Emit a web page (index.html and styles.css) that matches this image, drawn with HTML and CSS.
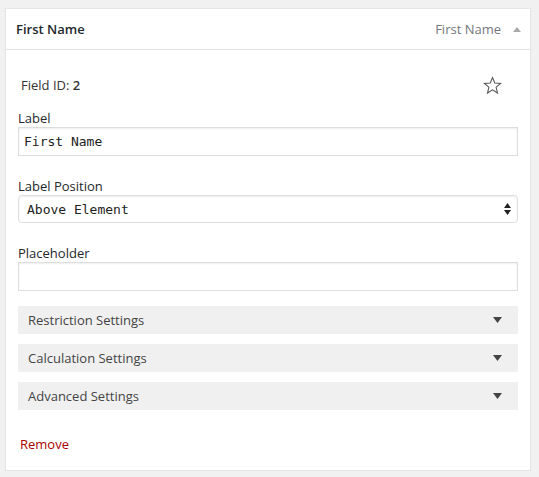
FILE: index.html
```html
<!DOCTYPE html>
<html>
<head>
<meta charset="utf-8">
<link rel="stylesheet" href="styles.css">
</head>
<body>
<div class="card">
  <div class="card-header">
    <span class="title">First Name</span>
    <span class="header-right">
      <span class="subtitle">First Name</span>
      <svg class="up-arrow" width="8" height="5" viewBox="0 0 8 5"><path d="M0 5 L4 0 L8 5 Z" fill="#aaa"/></svg>
    </span>
  </div>
  <div class="card-body">
    <div class="id-row">
      <span class="field-id">Field ID: <b>2</b></span>
      <svg class="star" width="19" height="19" viewBox="0 0 20 20"><path d="M10 1.6 L12.4 7.4 L18.6 7.8 L13.8 11.8 L15.3 17.9 L10 14.6 L4.7 17.9 L6.2 11.8 L1.4 7.8 L7.6 7.4 Z" fill="none" stroke="#555" stroke-width="1.1" stroke-linejoin="miter"/></svg>
    </div>
    <div class="field">
      <label class="field-label">Label</label>
      <input class="text-input" type="text" value="First Name">
    </div>
    <div class="field">
      <label class="field-label">Label Position</label>
      <div class="select-wrap">
        <select class="select"><option>Above Element</option></select>
        <svg class="select-arrows" width="7" height="12" viewBox="0 0 7 12"><path d="M3.5 0 L7 5 L0 5 Z M0 7 L7 7 L3.5 12 Z" fill="#222"/></svg>
      </div>
    </div>
    <div class="field last">
      <label class="field-label">Placeholder</label>
      <input class="text-input" type="text" value="">
    </div>
    <div class="accordions">
      <div class="accordion"><span>Restriction Settings</span><svg width="9" height="6" viewBox="0 0 9 6"><path d="M0 0 L9 0 L4.5 6 Z" fill="#444"/></svg></div>
      <div class="accordion"><span>Calculation Settings</span><svg width="9" height="6" viewBox="0 0 9 6"><path d="M0 0 L9 0 L4.5 6 Z" fill="#444"/></svg></div>
      <div class="accordion"><span>Advanced Settings</span><svg width="9" height="6" viewBox="0 0 9 6"><path d="M0 0 L9 0 L4.5 6 Z" fill="#444"/></svg></div>
    </div>
    <a class="remove" href="#">Remove</a>
  </div>
</div>
</body>
</html>
```
FILE: styles.css
```css
html, body {
  margin: 0;
  padding: 0;
  background: #f1f1f1;
}
body {
  font-family: "Open Sans", "Liberation Sans", sans-serif;
  font-size: 13px;
  color: #23282d;
  padding: 8px 8px 0 5px;
}
.card {
  width: 526px;
  height: 463px;
  box-sizing: border-box;
  background: #fff;
  border: 1px solid #e5e5e5;
  box-shadow: 0 1px 1px rgba(0,0,0,.04);
}
.card-header {
  height: 40px;
  border-bottom: 1px solid #e1e1e1;
  display: flex;
  align-items: center;
  justify-content: space-between;
  padding: 0 9px 0 10px;
}
.title {
  font-weight: 600;
  color: #23282d;
}
.header-right {
  display: flex;
  align-items: center;
  gap: 12px;
}
.subtitle {
  color: #72777c;
}
.card-body {
  padding: 26px 12px 0 12px;
}
.id-row {
  display: flex;
  justify-content: space-between;
  align-items: center;
  height: 18px;
  line-height: 18px;
  padding-left: 3px;
  padding-right: 16px;
  margin-bottom: 15px;
}
.field-id {
  color: #333;
}
.field-id b {
  font-weight: 600;
}
.star {
  display: block;
}
.field {
  display: flex;
  flex-direction: column;
  margin-bottom: 21px;
}
.field.last {
  margin-bottom: 15px;
}
.field-label {
  line-height: 18px;
  height: 18px;
  color: #23282d;
}
.text-input {
  height: 29px;
  box-sizing: border-box;
  border: 1px solid #ddd;
  box-shadow: inset 0 1px 2px rgba(0,0,0,.07);
  padding: 0 5px;
  margin: 0;
  font-family: "DejaVu Sans Mono", "Liberation Mono", monospace;
  font-size: 13px;
  color: #222;
  background: #fff;
  outline: none;
  border-radius: 0;
}
.select-wrap {
  position: relative;
}
.select {
  width: 100%;
  height: 28px;
  box-sizing: border-box;
  -webkit-appearance: none;
  appearance: none;
  border: 1px solid #ddd;
  border-radius: 4px;
  background: #fff;
  box-shadow: inset 0 1px 2px rgba(0,0,0,.07);
  padding: 0 8px;
  margin: 0;
  font-family: "DejaVu Sans Mono", "Liberation Mono", monospace;
  font-size: 13px;
  color: #222;
}
.select-arrows {
  position: absolute;
  right: 7px;
  top: 8px;
  pointer-events: none;
}
.accordions {
  display: flex;
  flex-direction: column;
  gap: 10px;
}
.accordion {
  height: 28px;
  background: #f0f0f0;
  display: flex;
  align-items: center;
  justify-content: space-between;
  padding: 0 16px 0 10px;
  color: #444;
}
.accordion svg {
  display: block;
}
.remove {
  display: block;
  margin-top: 25px;
  margin-left: 2px;
  line-height: 18px;
  color: #a00;
  text-decoration: none;
}
```
